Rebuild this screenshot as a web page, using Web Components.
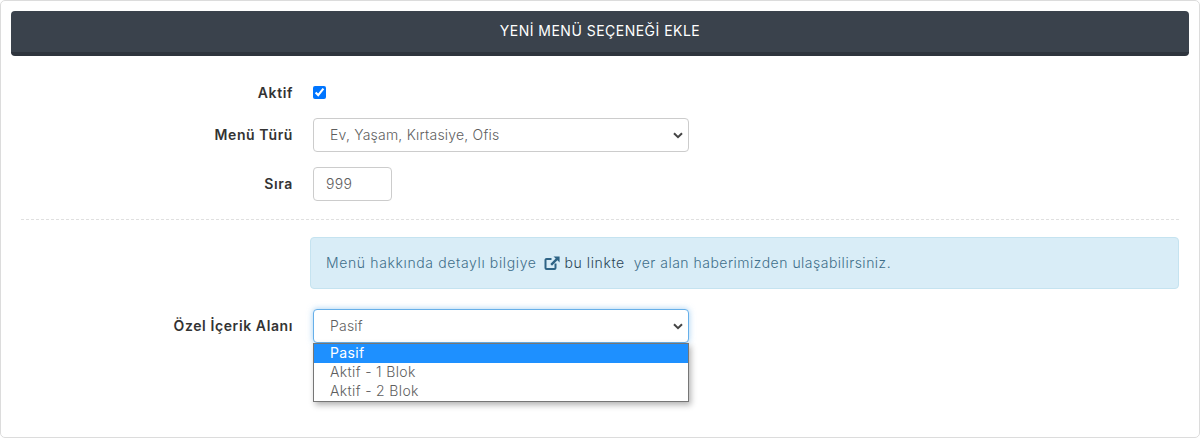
<!DOCTYPE html>
<html lang="tr">
<head>
<meta charset="utf-8">
<title>Yeni Menü Seçeneği Ekle</title>
<style>
  html, body { margin: 0; background: #fff; }
  body { font: 14px/20px Inter, "Open Sans", sans-serif; color: #333; }
</style>
</head>
<body>
<panel-card heading="YENİ MENÜ SEÇENEĞİ EKLE">
  <form-row label="Aktif" compact><input type="checkbox" checked style="margin:0;width:13px;height:13px;display:block"></form-row>
  <form-row label="Menü Türü"><select-box width="376" value="Ev, Yaşam, Kırtasiye, Ofis"></select-box></form-row>
  <form-row label="Sıra"><text-box width="79" value="999"></text-box></form-row>
  <dash-line></dash-line>
  <info-alert>
    <span>Menü hakkında detaylı bilgiye</span> <link-icon></link-icon> <a>bu linkte</a>&nbsp; yer alan haberimizden ulaşabilirsiniz.
  </info-alert>
  <form-row label="Özel İçerik Alanı">
    <select-box width="376" value="Pasif" open>
      <drop-option selected>Pasif</drop-option>
      <drop-option>Aktif - 1 Blok</drop-option>
      <drop-option>Aktif - 2 Blok</drop-option>
    </select-box>
  </form-row>
</panel-card>

<script>
  class PanelCard extends HTMLElement {
    constructor() {
      super();
      this.attachShadow({ mode: "open" });
      this.shadowRoot.innerHTML = `
        <style>
          :host {
            display: block;
            box-sizing: border-box;
            height: 438px;
            padding: 10px;
            border: 1px solid #dcdcdc;
            border-radius: 5px;
            background: #fff;
          }
          header {
            box-sizing: border-box;
            height: 45px;
            padding-top: 9px;
            background: #3a424c;
            border-bottom: 4px solid #2e343d;
            border-radius: 4px;
            color: #fff;
            font-size: 14px;
            letter-spacing: 0.48px;
            line-height: 22px;
            text-align: center;
          }
          .body {
            display: flex;
            flex-direction: column;
            gap: 15px;
            padding: 25px 10px 0;
          }
        </style>
        <header></header>
        <div class="body"><slot></slot></div>
      `;
    }
    connectedCallback() {
      this.shadowRoot.querySelector("header").textContent = this.getAttribute("heading");
    }
  }
  customElements.define("panel-card", PanelCard);

  class FormRow extends HTMLElement {
    constructor() {
      super();
      this.attachShadow({ mode: "open" });
      this.shadowRoot.innerHTML = `
        <style>
          :host {
            display: grid;
            grid-template-columns: 272px auto;
            column-gap: 20px;
            align-items: center;
            justify-content: start;
            min-height: 34px;
          }
          :host([compact]) { min-height: 22px; }
          :host([compact]) label { padding-top: 1px; }
          label {
            font-weight: 600;
            font-size: 14px;
            letter-spacing: 0.6px;
            color: #333;
            text-align: right;
          }
        </style>
        <label></label>
        <div><slot></slot></div>
      `;
    }
    connectedCallback() {
      this.shadowRoot.querySelector("label").textContent = this.getAttribute("label");
    }
  }
  customElements.define("form-row", FormRow);

  class SelectBox extends HTMLElement {
    constructor() {
      super();
      this.attachShadow({ mode: "open" });
      this.shadowRoot.innerHTML = `
        <style>
          :host { display: block; position: relative; }
          .box {
            box-sizing: border-box;
            display: flex;
            align-items: center;
            justify-content: space-between;
            height: 34px;
            padding: 0 5px 0 16px;
            border: 1px solid #ccc;
            border-radius: 4px;
            background: #fff;
            color: #5e5e5e;
            font-size: 14px;
            font-weight: 300;
            letter-spacing: 0.2px;
          }
          :host([open]) .box {
            border-color: #66afe9;
            box-shadow: 0 0 6px rgba(102, 175, 233, .6);
          }
          svg { display: block; }
          .list {
            display: none;
            position: absolute;
            left: 0;
            right: 0;
            top: 34px;
            box-sizing: border-box;
            border: 1px solid #767676;
            background: #fff;
            box-shadow: 2px 3px 6px rgba(0, 0, 0, .3);
          }
          :host([open]) .list { display: block; }
        </style>
        <div class="box">
          <span class="value"></span>
          <svg width="10" height="7" viewBox="0 0 10 7"><path d="M1 1.2 5 5.2 9 1.2" fill="none" stroke="#444" stroke-width="2"/></svg>
        </div>
        <div class="list"><slot></slot></div>
      `;
    }
    connectedCallback() {
      this.style.width = this.getAttribute("width") + "px";
      this.shadowRoot.querySelector(".value").textContent = this.getAttribute("value");
    }
  }
  customElements.define("select-box", SelectBox);

  class DropOption extends HTMLElement {
    constructor() {
      super();
      this.attachShadow({ mode: "open" });
      this.shadowRoot.innerHTML = `
        <style>
          :host {
            display: block;
            height: 19px;
            padding-left: 16px;
            color: #5e5e5e;
            font-size: 14px;
            font-weight: 300;
            letter-spacing: 0.35px;
            line-height: 18px;
          }
          :host([selected]) { background: #1e90ff; color: #fff; font-weight: 400; }
        </style>
        <slot></slot>
      `;
    }
  }
  customElements.define("drop-option", DropOption);

  class TextBox extends HTMLElement {
    constructor() {
      super();
      this.attachShadow({ mode: "open" });
      this.shadowRoot.innerHTML = `
        <style>
          :host {
            display: block;
            box-sizing: border-box;
            height: 34px;
            padding: 0 12px;
            border: 1px solid #ccc;
            border-radius: 4px;
            color: #5e5e5e;
            font-size: 14px;
            font-weight: 300;
            letter-spacing: 0.3px;
            line-height: 32px;
          }
        </style>
        <span></span>
      `;
    }
    connectedCallback() {
      this.style.width = this.getAttribute("width") + "px";
      this.shadowRoot.querySelector("span").textContent = this.getAttribute("value");
    }
  }
  customElements.define("text-box", TextBox);

  class DashLine extends HTMLElement {
    constructor() {
      super();
      this.attachShadow({ mode: "open" });
      this.shadowRoot.innerHTML = `
        <style>
          :host {
            display: block;
            margin-top: 3px;
            margin-bottom: 2px;
            border-top: 1px dashed #e0e0e0;
          }
        </style>
      `;
    }
  }
  customElements.define("dash-line", DashLine);

  class InfoAlert extends HTMLElement {
    constructor() {
      super();
      this.attachShadow({ mode: "open" });
      this.shadowRoot.innerHTML = `
        <style>
          :host {
            display: block;
            box-sizing: border-box;
            height: 52px;
            margin-left: 289px;
            margin-bottom: 5px;
            padding: 15px;
            border: 1px solid #c5e3f0;
            border-radius: 4px;
            background: #d9edf7;
            color: #3f6f8a;
            font-size: 14px;
            font-weight: 300;
            letter-spacing: 0.49px;
            line-height: 20px;
          }
          ::slotted(span) { letter-spacing: 0.63px; }
          ::slotted(a) { color: #2a4658; letter-spacing: 0.6px; }
        </style>
        <slot></slot>
      `;
    }
  }
  customElements.define("info-alert", InfoAlert);

  class LinkIcon extends HTMLElement {
    constructor() {
      super();
      this.attachShadow({ mode: "open" });
      this.shadowRoot.innerHTML = `
        <style>
          :host { display: inline-block; margin: 0 0 0 3px; vertical-align: -2px; }
          svg { display: block; }
        </style>
        <svg width="16" height="14" viewBox="0 0 16 14">
          <path d="M7.5 3H2.6A1.1 1.1 0 0 0 1.5 4.1v7.8A1.1 1.1 0 0 0 2.6 13h7.8a1.1 1.1 0 0 0 1.1-1.1V7.5" fill="none" stroke="#2f6486" stroke-width="2"/>
          <path d="M9.5 .4H15.6V6.5L13.4 4.3 8 9.7 6.3 8 11.7 2.6Z" fill="#2f6486"/>
        </svg>
      `;
    }
  }
  customElements.define("link-icon", LinkIcon);
</script>
</body>
</html>
